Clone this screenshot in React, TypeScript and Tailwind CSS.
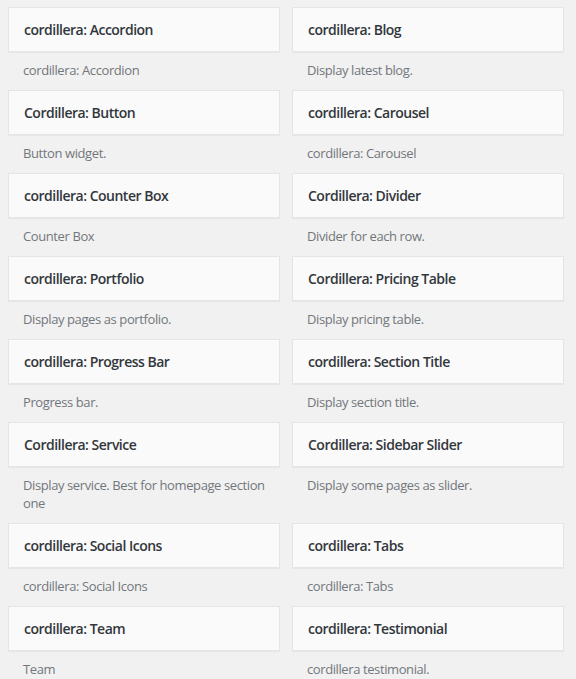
import React from 'react';

type Widget = { title: string; description: string };

const widgets: Widget[] = [
  { title: 'cordillera: Accordion', description: 'cordillera: Accordion' },
  { title: 'cordillera: Blog', description: 'Display latest blog.' },
  { title: 'Cordillera: Button', description: 'Button widget.' },
  { title: 'cordillera: Carousel', description: 'cordillera: Carousel' },
  { title: 'cordillera: Counter Box', description: 'Counter Box' },
  { title: 'Cordillera: Divider', description: 'Divider for each row.' },
  { title: 'cordillera: Portfolio', description: 'Display pages as portfolio.' },
  { title: 'Cordillera: Pricing Table', description: 'Display pricing table.' },
  { title: 'cordillera: Progress Bar', description: 'Progress bar.' },
  { title: 'cordillera: Section Title', description: 'Display section title.' },
  { title: 'Cordillera: Service', description: 'Display service. Best for homepage section one' },
  { title: 'Cordillera: Sidebar Slider', description: 'Display some pages as slider.' },
  { title: 'cordillera: Social Icons', description: 'cordillera: Social Icons' },
  { title: 'cordillera: Tabs', description: 'cordillera: Tabs' },
  { title: 'cordillera: Team', description: 'Team' },
  { title: 'cordillera: Testimonial', description: 'cordillera testimonial.' },
];

const WidgetItem: React.FC<{ widget: Widget }> = ({ widget }) => (
  <div>
    <div className="h-[45px] flex items-center px-[15px] bg-[#fafafa] border border-[#e5e5e5] shadow-[0_1px_1px_rgba(0,0,0,0.04)]">
      <h3 className="text-[14px] font-semibold leading-none tracking-[-0.5px] text-[#32373c]">
        {widget.title}
      </h3>
    </div>
    <p className="pt-[9px] pb-[11px] px-[15px] text-[13px] leading-[18px] tracking-[-0.4px] text-[#72777c]">
      {widget.description}
    </p>
  </div>
);

const App: React.FC = () => {
  return (
    <div
      className="min-h-screen bg-[#f1f1f1] pt-[7px] pl-2 pr-[12px]"
      style={{ fontFamily: '"Open Sans", sans-serif' }}
    >
      <div className="grid grid-cols-2 gap-x-[12px]">
        {widgets.map((w) => (
          <WidgetItem key={w.title} widget={w} />
        ))}
      </div>
    </div>
  );
};

export default App;
